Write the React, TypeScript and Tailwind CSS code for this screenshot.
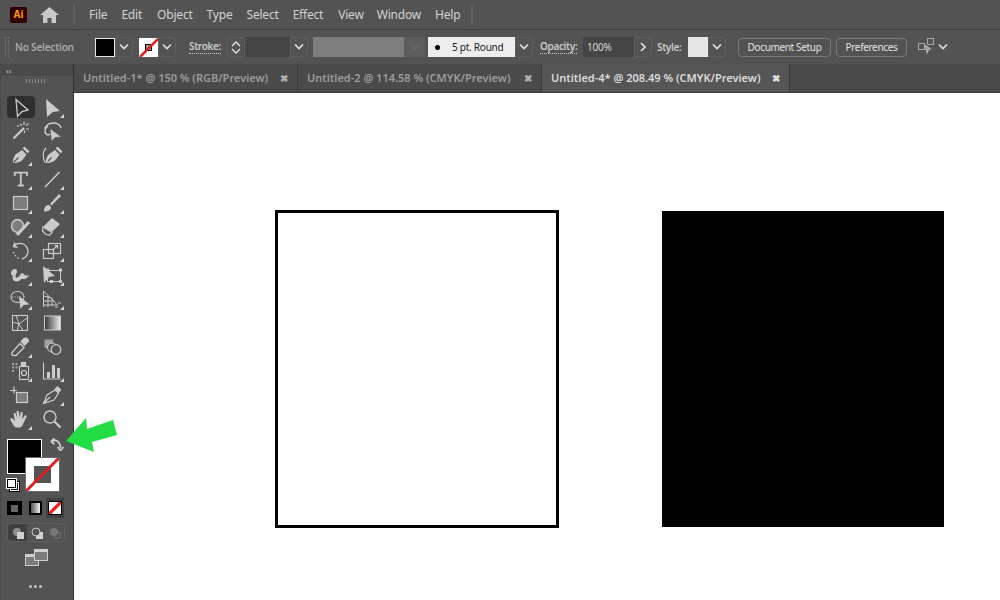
import type { ReactNode } from "react";

const ink = "#cbcbcb";
const panel = "#535353";

const Chevron = ({ dim }: { dim?: boolean }) => (
  <svg width="12" height="8" viewBox="0 0 12 8" fill="none" stroke={dim ? "#6a6a6a" : "#e2e2e2"} strokeWidth="1.6">
    <path d="M2 1.5l4 4 4-4" />
  </svg>
);

const ChevBox = () => (
  <div className="flex h-[20px] w-[18px] shrink-0 items-center justify-center rounded-r-sm border border-[#5f5f5f]">
    <Chevron />
  </div>
);

const Flag = () => (
  <svg width="4" height="4" viewBox="0 0 4 4" className="absolute bottom-[1px] right-[4px]">
    <path d="M4 0v4H0z" fill="#d6d6d6" />
  </svg>
);

const Tool = ({ children, flag, active }: { children: ReactNode; flag?: boolean; active?: boolean }) => (
  <div className="relative flex h-[24px] w-[32px] items-center justify-center">
    {active && <div className="absolute left-[3px] top-[1px] h-[22px] w-[28px] rounded-sm bg-[#2f2f2f]" />}
    <svg width="20" height="20" viewBox="0 0 20 20" fill="none" stroke={ink} strokeWidth="1.2" className="relative overflow-visible">
      {children}
    </svg>
    {flag && <Flag />}
  </div>
);

const PenBody = () => (
  <>
    <path d="M3 18C2.500 13 5 9 8.500 7.500L12 5l4.500 4.500-2.500 3.500C12.500 16 8 18 3 18z" fill={ink} stroke="none" />
    <path d="M3.500 17.500L8.500 12.500" stroke={panel} />
    <path d="M14.500 1.500l5 5-1.800 1.800-5-5z" fill={ink} stroke="none" />
  </>
);

const tools: { flag?: boolean; active?: boolean; icon: ReactNode }[] = [
  { active: true, icon: <path d="M6 2.500L18 13l-6 1.500-4.500 5z" strokeWidth="1.300" /> },
  { flag: true, icon: <path d="M4 2l14 12-7 1-6 5z" fill={ink} stroke="none" /> },
  { icon: <><path d="M3.500 17.500L14 7" strokeWidth="2.300" /><path d="M14 0.500v3.500M10 3l2 1.500M18.500 2.500l-2.500 2M19 8h-3M7 4.500l2 1M14.500 12v-2.500" /></> },
  { icon: <><path d="M3 8.500C3 4.500 7 2 11 2s8 2 8 5" strokeWidth="1.400" /><path d="M6 5C2 8 2 13 6 14l2.500-1" strokeWidth="1.400" /><path d="M8 7.500l11.500 8.500-6.500.5-3.500 4z" fill={ink} stroke={panel} strokeWidth="0.600" /></> },
  { flag: true, icon: <PenBody /> },
  { icon: <><g transform="translate(1 0)"><PenBody /></g><path d="M4 3C0 7 1 14 3 17c2 1.500 3-1 2-3" strokeWidth="1.200" /></> },
  { flag: true, icon: <path d="M4.700 7V3.700H17V7M10.800 3.700V16.500M7.800 16.500h6" strokeWidth="1.800" /> },
  { flag: true, icon: <path d="M3 18L17.500 3" strokeWidth="1.600" /> },
  { flag: true, icon: <rect x="3.500" y="3.500" width="14" height="13" fill="#7d7d7d" /> },
  { flag: true, icon: <><path d="M2 18.500c0-4 1.500-6.500 5-6.500l2 2c0 3.500-3 4.500-7 4.500z" fill={ink} stroke="none" /><path d="M8 11L17 1l2 2-9.500 9.500z" fill={ink} stroke="none" /></> },
  { flag: true, icon: <><ellipse cx="7.500" cy="9" rx="6" ry="6.500" fill="#7d7d7d" stroke={ink} strokeWidth="1.400" /><path d="M7 18L19 5" strokeWidth="3" /></> },
  { flag: true, icon: <><path d="M1 10L10 1l8 6-8 8z" fill={ink} stroke="none" /><path d="M1 10l9 5.500-2.500 2.500-3.500-.5L0.500 14z" fill={panel} stroke={ink} /></> },
  { flag: true, icon: <><path d="M5 1.500L3.500 5.500l4 1" strokeWidth="1.400" /><path d="M3.500 5.500A8 8 0 1 1 12 18" strokeWidth="1.300" /><path d="M3.500 11c1 3 3 6 7 7" strokeDasharray="1.500 2" strokeWidth="1.300" /></> },
  { flag: true, icon: <><rect x="1.500" y="8.500" width="10" height="9" strokeWidth="1.200" /><rect x="6.500" y="2.500" width="12" height="10" strokeWidth="1.200" /><path d="M10.500 9l5-4.500M12.500 4.500h3v3" /></> },
  { flag: true, icon: <path d="M1 8c0-3 5-6 6-2 .5 2-2 3.500-1.500 6 1 2 3.500-.5 5-2.500s3-1 3.500 0 3 1.500 5 .5c-1 3-4 5-7 3.500-1.500 1.500-4.500 4-7.500 2.500-2-1-2.500-3-1.500-5C2 10.500 1 9.500 1 8z" fill={ink} stroke="none" /> },
  { flag: true, icon: <><path d="M1 1l12 10-6 1-5 6z" fill={ink} stroke="none" /><rect x="5.500" y="5.500" width="13" height="11" strokeWidth="1" /><path d="M4 3.500h3v3H4zM17 3.500h3v3h-3zM17 15h3v3h-3zM8 15h3v3H8z" fill={ink} stroke="none" /></> },
  { flag: true, icon: <><ellipse cx="7.500" cy="8" rx="6.500" ry="5.500" strokeWidth="1.100" /><path d="M2 8h9" strokeDasharray="1 1.500" strokeWidth="1.100" /><path d="M9 7l10.500 8.500-6 .5-3 4z" fill={ink} stroke="none" /></> },
  { flag: true, icon: <><path d="M1.500 18V2l14 14H1.500M6 18V6.500M10 17v-6M1.500 7l8 2 3 4M1.500 12h8" strokeWidth="1" /><path d="M13 18h3M16 14h3" strokeWidth="1" /></> },
  { icon: <><rect x="2.500" y="2.500" width="15" height="15" strokeWidth="1.100" /><path d="M2.500 9l6.500 2 8-6M9 11l-2 6.500M9 11l4 6.500M6 2.500l3 8.500" strokeWidth="1" /></> },
  { icon: <rect x="2.500" y="3" width="16" height="14" fill="url(#toolGrad)" stroke={ink} strokeWidth="1" /> },
  { flag: true, icon: <><path d="M4 18.500c-2 0-2.500-1.500-2-3l8-9 4 4-8 8z" strokeWidth="1.400" /><path d="M10.500 4.500l3-3.500c1.500-1 4-.5 5 1 .8 1.500.5 3-1 4l-3 3z" fill={ink} stroke="none" /></> },
  { icon: <><rect x="2.500" y="2.500" width="8.500" height="8.500" fill="#a0a0a0" stroke="none" /><circle cx="10" cy="10.500" r="4.500" fill={panel} strokeWidth="1.100" /><circle cx="14" cy="12.500" r="4.800" fill={panel} strokeWidth="1.300" /></> },
  { flag: true, icon: <><path d="M2 3h2M5.500 3h2M2 6.500h2M5.500 6.500h2M2 10h2" strokeWidth="2" strokeOpacity=".7" /><rect x="9.500" y="5.500" width="9" height="13" strokeWidth="1.100" /><rect x="11.500" y="1.500" width="4" height="3.500" fill={ink} /><circle cx="14" cy="12" r="2.500" strokeWidth="1.200" /></> },
  { flag: true, icon: <><path d="M1.500 1.500v16.500H19" strokeWidth="1.100" /><path d="M5 17v-6h3v6zM10 17V4h3v13zM15 17V7h3v10z" fill={ink} stroke="none" /></> },
  { icon: <><path d="M0 5.500h7M4 1.500v7" /><rect x="6.500" y="7.500" width="11" height="10" fill="#7d7d7d" /></> },
  { flag: true, icon: <><path d="M1.500 18.500L5 10l8-5 3.500 3-4.500 7z" strokeWidth="1.200" /><path d="M12.500 4l3-3 4 4-3 3z" fill={ink} stroke="none" /><path d="M1.500 18.500L8 12" /></> },
  { flag: true, icon: <path d="M5.500 18.500C3 16 1 12 0 10l2-1 3 3-1.500-8h2l1.500 5-.5-7h2.200l1 7 1-6h2l-.5 7 3-4 1.800 1-3.500 7c-1 2.500-2 4.500-4 4.500z" fill={ink} stroke="none" /> },
  { icon: <><circle cx="8" cy="8" r="6" strokeWidth="1.400" /><path d="M12.500 12.500L18.500 18.500" strokeWidth="2.200" /></> },
];

const MenuItem = ({ label, className }: { label: string; className: string }) => (
  <span className={`${className} text-[12px] tracking-[-0.2px] text-[#d2d2d2]`}>{label}</span>
);

const Tab = ({ label, active, className }: { label: string; active?: boolean; className: string }) => (
  <div
    className={`${className} flex h-full shrink-0 items-center justify-between border-r border-[#3c3c3c] pl-[9px] pr-[9px] text-[11px] font-semibold ${
      active ? "bg-[#565656] text-[#dcdcdc]" : "text-[#9c9c9c]"
    }`}
  >
    <span>{label}</span>
    <span className={`text-[10px] ${active ? "text-[#e0e0e0]" : "text-[#b0b0b0]"}`}>✖</span>
  </div>
);

const Label = ({ text, className }: { text: string; className: string }) => (
  <span className={`${className} border-b border-dotted border-[#c9c9c9] text-[10px] font-semibold leading-[13px] tracking-[-0.35px] text-[#c9c9c9]`}>
    {text}
  </span>
);

export default function App() {
  return (
    <div className="relative flex h-[600px] w-[1000px] flex-col overflow-hidden bg-white font-['Noto_Sans',sans-serif]">
      <svg width="0" height="0" className="absolute">
        <defs>
          <linearGradient id="toolGrad" x1="0" x2="1" y1="0" y2="0">
            <stop offset="0" stopColor="#333" />
            <stop offset="1" stopColor="#eee" />
          </linearGradient>
        </defs>
      </svg>

      {/* Menu bar */}
      <div className="flex h-[29px] shrink-0 items-center bg-[#535353]">
        <div className="ml-[10px] flex h-[16px] w-[17px] items-center justify-center rounded-[2px] bg-[#330000] text-[10px] font-bold text-[#ff9a00]">
          Ai
        </div>
        <svg width="19" height="16" viewBox="0 0 19 16" className="ml-[13px]" fill="#c8c8c8">
          <path d="M9.500 0L0 8h3v8h4.500v-5h4v5H16V8h3z" />
        </svg>
        <div className="ml-[14px] h-[20px] w-[2px] bg-[#616161]" />
        <MenuItem label="File" className="ml-[14px]" />
        <MenuItem label="Edit" className="ml-[14px]" />
        <MenuItem label="Object" className="ml-[15px]" />
        <MenuItem label="Type" className="ml-[14px]" />
        <MenuItem label="Select" className="ml-[14px]" />
        <MenuItem label="Effect" className="ml-[14px]" />
        <MenuItem label="View" className="ml-[15px]" />
        <MenuItem label="Window" className="ml-[13px]" />
        <MenuItem label="Help" className="ml-[14px]" />
        <div className="ml-[11px] h-[20px] w-[2px] bg-[#616161]" />
      </div>

      {/* Control bar */}
      <div className="flex h-[35px] shrink-0 items-center border-t border-[#3e3e3e] bg-[#535353]">
        <div className="ml-[5px] h-[20px] w-[4px] border-x border-dotted border-[#777]" />
        <span className="ml-[6px] w-[80px] text-[10px] font-semibold tracking-[-0.2px] text-[#a9a9a9]">No Selection</span>
        <div className="h-[19px] w-[20px] border border-[#e6e6e6] bg-black" />
        <ChevBox />
        <div className="relative ml-[6px] h-[19px] w-[19px] overflow-hidden bg-white">
          <div className="absolute left-[6px] top-[6px] h-[7px] w-[7px] border border-black bg-[#999]" />
          <svg width="19" height="19" className="absolute inset-0">
            <path d="M1 19L19 1" stroke="#e02020" strokeWidth="2.500" />
          </svg>
        </div>
        <ChevBox />
        <Label text="Stroke:" className="ml-[13px] w-[32px]" />
        <div className="ml-[6px] flex h-[20px] w-[18px] flex-col items-center justify-center gap-[1px] rounded-l-sm border border-[#5f5f5f]">
          <svg width="10" height="6" viewBox="0 0 10 6" fill="none" stroke="#e2e2e2" strokeWidth="1.400"><path d="M1 5l4-4 4 4" /></svg>
          <svg width="10" height="6" viewBox="0 0 10 6" fill="none" stroke="#e2e2e2" strokeWidth="1.400"><path d="M1 1l4 4 4-4" /></svg>
        </div>
        <div className="h-[20px] w-[45px] bg-[#454545]" />
        <ChevBox />
        <div className="ml-[5px] h-[20px] w-[91px] bg-[#7e7e7e]" />
        <div className="flex h-[20px] w-[21px] items-center justify-center bg-[#5d5d5d]">
          <Chevron dim />
        </div>
        <div className="ml-[3px] flex h-[20px] w-[87px] items-center bg-[#ededed] text-[10px] tracking-[-0.25px] text-[#222]">
          <span className="ml-[7px] h-[5px] w-[5px] rounded-full bg-black" />
          <span className="ml-[12px]">5 pt. Round</span>
        </div>
        <ChevBox />
        <Label text="Opacity:" className="ml-[7px] w-[37px]" />
        <div className="ml-[6px] flex h-[20px] w-[51px] items-center bg-[#454545] pl-[4px] text-[10px] tracking-[-0.2px] text-[#d8d8d8]">100%</div>
        <div className="flex h-[20px] w-[18px] items-center justify-center rounded-r-sm border border-[#5f5f5f]">
          <svg width="6" height="10" viewBox="0 0 6 10" fill="none" stroke="#e2e2e2" strokeWidth="1.600"><path d="M1 1l4 4-4 4" /></svg>
        </div>
        <span className="ml-[5px] w-[24px] text-[10px] font-semibold tracking-[-0.35px] text-[#c9c9c9]">Style:</span>
        <div className="ml-[7px] h-[20px] w-[20px] bg-[#e6e6e6]" />
        <ChevBox />
        <div className="ml-[12px] flex h-[19px] w-[93px] items-center justify-center rounded-sm border border-[#7a7a7a] text-[10px] tracking-[-0.35px] text-[#e2e2e2]">
          Document Setup
        </div>
        <div className="ml-[5px] flex h-[19px] w-[71px] items-center justify-center rounded-sm border border-[#7a7a7a] text-[10px] tracking-[-0.35px] text-[#e2e2e2]">
          Preferences
        </div>
        <svg width="20" height="20" viewBox="0 0 20 20" className="ml-[10px]" fill="none" stroke="#a8a8a8">
          <rect x="1.500" y="6.500" width="6" height="6" />
          <rect x="10.500" y="1.500" width="6" height="6" />
          <path d="M7 7l8 5-3 1-2 5z" fill="#a8a8a8" stroke="none" />
        </svg>
        <Chevron />
      </div>

      {/* Body */}
      <div className="flex min-h-0 flex-1">
        <aside className="flex w-[74px] shrink-0 flex-col border-r border-[#2f2f2f] bg-[#4a4a4a]">
          <div className="flex h-[12px] items-center pl-[6px] text-[9px] leading-none text-[#c9c9c9]">‹‹</div>
          <div className="ml-[1px] flex min-h-0 flex-1 flex-col items-start bg-[#535353] pl-[3px]">
            <div className="ml-[22px] mt-[3px] h-[4px] w-[19px] bg-[repeating-linear-gradient(90deg,#8a8a8a_0_1px,transparent_1px_3px)]" />
            <div className="mt-[12px] grid auto-rows-[24px] grid-cols-[32px_32px]">
              {tools.map((t, i) => (
                <Tool key={i} flag={t.flag} active={t.active}>
                  {t.icon}
                </Tool>
              ))}
            </div>

            {/* Fill and stroke */}
            <div className="relative ml-[3px] mt-[8px] h-[54px] w-[58px]">
              <div className="h-[35px] w-[35px] border border-white bg-black" />
              <div className="absolute left-[18px] top-[18px] h-[35px] w-[35px] overflow-hidden border border-[#6a6a6a] bg-white">
                <div className="m-[8px] h-[17px] w-[17px] bg-[#535353]" />
                <svg width="35" height="35" className="absolute inset-0">
                  <path d="M0 33L35 -2" stroke="#d92020" strokeWidth="3" />
                </svg>
              </div>
              <svg width="14" height="14" viewBox="0 0 14 14" className="absolute left-[43px] top-[-1px]" fill="none" stroke="#d0d0d0" strokeWidth="1.700">
                <path d="M1.500 3.500C6 1 10 3 10.500 10M1 3.500L4.500 0.500M1 3.500l3.500 2.500M10.500 12.500L7.500 9M10.500 12.500L13.500 9" />
              </svg>
              {/* default fill and stroke */}
              <div className="absolute left-[3px] top-[43px] h-[9px] w-[9px] border border-white bg-black outline outline-1 outline-black" />
              <div className="absolute left-[0px] top-[40px] h-[9px] w-[9px] border border-black bg-white outline outline-1 outline-white" />
            </div>

            {/* Colour modes */}
            <div className="ml-[3px] mt-[5px] flex h-[20px] w-[58px] items-center rounded-sm">
              <div className="flex h-[14px] w-[15px] items-center justify-center bg-black">
                <div className="h-[7px] w-[7px] bg-[#666]" />
              </div>
              <div className="ml-[7px] h-[14px] w-[13px] border-2 border-black bg-[linear-gradient(90deg,#555,#f2f2f2)]" />
              <div className="ml-[4px] flex h-[20px] w-[18px] items-center justify-center bg-[#404040]">
                <div className="relative h-[14px] w-[14px] overflow-hidden border border-black bg-white">
                  <svg width="12" height="12" className="absolute inset-0"><path d="M0 12L12 0" stroke="#ee1c1c" strokeWidth="3.200" /></svg>
                </div>
              </div>
            </div>

            {/* Draw modes */}
            <div className="ml-[3px] mt-[5px] flex h-[19px] w-[58px] rounded-sm border border-[#5f5f5f]">
              <div className="flex w-[19px] items-center justify-center rounded-l-sm bg-[#3f3f3f]">
                <svg width="12" height="12" viewBox="0 0 12 12"><circle cx="5" cy="5" r="4" fill="#8e8e8e" /><rect x="5" y="5" width="7" height="7" fill="#d0d0d0" /></svg>
              </div>
              <div className="flex w-[19px] items-center justify-center">
                <svg width="12" height="12" viewBox="0 0 12 12"><circle cx="5" cy="5" r="4" fill="none" stroke="#c8c8c8" /><path d="M5 9a4 4 0 0 0 4-4h3v7H5z" fill="#d0d0d0" /></svg>
              </div>
              <div className="flex w-[18px] items-center justify-center">
                <svg width="12" height="12" viewBox="0 0 12 12"><circle cx="5" cy="5" r="4" fill="#777" /><rect x="5.500" y="5.500" width="5.500" height="5.500" fill="none" stroke="#777" /></svg>
              </div>
            </div>

            {/* Screen mode */}
            <svg width="23" height="17" viewBox="0 0 23 17" className="ml-[21px] mt-[7px]">
              <rect x="0.500" y="5.500" width="13" height="11" fill="#7b7b7b" stroke="#cfcfcf" />
              <rect x="9.500" y="0.500" width="13" height="11" fill="#7b7b7b" stroke="#cfcfcf" />
              <rect x="9.500" y="0.500" width="13" height="2.500" fill="#cfcfcf" />
              <rect x="0.500" y="5.500" width="9" height="2.500" fill="#cfcfcf" />
            </svg>
            <div className="ml-[25px] mt-[19px] flex gap-[2px]">
              <span className="h-[3px] w-[3px] rounded-full bg-[#c4c4c4]" />
              <span className="h-[3px] w-[3px] rounded-full bg-[#c4c4c4]" />
              <span className="h-[3px] w-[3px] rounded-full bg-[#c4c4c4]" />
            </div>
          </div>
        </aside>

        <main className="flex min-w-0 flex-1 flex-col">
          <div className="flex h-[29px] shrink-0 items-center border-b border-[#3c3c3c] bg-[#4a4a4a]">
            <Tab label="Untitled-1* @ 150 % (RGB/Preview)" className="w-[224px]" />
            <Tab label="Untitled-2 @ 114.58 % (CMYK/Preview)" className="w-[244px]" />
            <Tab label="Untitled-4* @ 208.49 % (CMYK/Preview)" active className="w-[248px]" />
          </div>
          {/* Artboard: shapes sit on a free canvas */}
          <div className="relative flex-1 bg-white">
            <div className="absolute left-[201px] top-[117px] h-[318px] w-[284px] border-[3px] border-black" />
            <div className="absolute left-[588px] top-[118px] h-[316px] w-[282px] bg-black" />
          </div>
        </main>
      </div>

      {/* Annotation arrow over the panel edge */}
      <svg width="54" height="36" viewBox="0 0 54 36" className="absolute left-[65px] top-[417px]">
        <path d="M1 24L21 1l1 11 26-9 4 15-25 7 2 10z" fill="#22dd44" />
      </svg>
    </div>
  );
}
